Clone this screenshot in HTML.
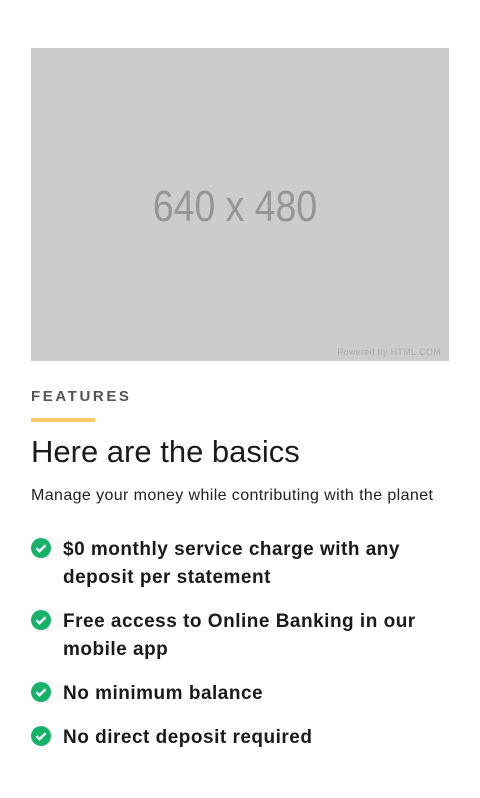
<!DOCTYPE html>
<html><head><style>
body{margin:0;background:#fff;font-family:"Liberation Sans",sans-serif;color:#1a1a1a}
.img{position:absolute;left:31px;top:48px;width:418px;height:313px;background:#ccc}
.img .t{position:absolute;left:-10px;right:0;top:134px;text-align:center;font-size:44px;color:#969696;transform:scaleX(.85)}
.img .p{position:absolute;right:8px;bottom:4px;font-size:9px;color:#aaa;letter-spacing:.3px}
.f{position:absolute;left:31px;top:388px;font-size:15px;font-weight:bold;letter-spacing:2.6px;color:#555}
.bar{position:absolute;left:31px;top:418px;width:64px;height:4px;background:#fbc765}
h1{position:absolute;left:31px;top:434px;margin:0;font-size:31px;font-weight:normal;color:#1b1b1b}
.s{position:absolute;left:31px;top:487px;font-size:16px;letter-spacing:.4px;color:#222}
.i{position:absolute;left:63px;font-size:19px;font-weight:bold;line-height:28px;width:400px;letter-spacing:.5px}
.c{position:absolute;left:31px;width:20px;height:20px}
</style></head><body>
<div class="img"><div class="t">640 x 480</div><div class="p">Powered by HTML.COM</div></div>
<div class="f">FEATURES</div><div class="bar"></div>
<h1>Here are the basics</h1>
<div class="s">Manage your money while contributing with the planet</div>
<svg class="c" style="top:538px" viewBox="0 0 20 20"><circle cx="10" cy="10" r="10" fill="#17b26a"/><path d="M5.5 10.2l3 3 6-6" stroke="#fff" stroke-width="2.4" fill="none"/></svg>
<div class="i" style="top:536px">$0 monthly service charge with any deposit per statement</div>
<svg class="c" style="top:610px" viewBox="0 0 20 20"><circle cx="10" cy="10" r="10" fill="#17b26a"/><path d="M5.5 10.2l3 3 6-6" stroke="#fff" stroke-width="2.4" fill="none"/></svg>
<div class="i" style="top:608px">Free access to Online Banking in our mobile app</div>
<svg class="c" style="top:682px" viewBox="0 0 20 20"><circle cx="10" cy="10" r="10" fill="#17b26a"/><path d="M5.5 10.2l3 3 6-6" stroke="#fff" stroke-width="2.4" fill="none"/></svg>
<div class="i" style="top:680px">No minimum balance</div>
<svg class="c" style="top:726px" viewBox="0 0 20 20"><circle cx="10" cy="10" r="10" fill="#17b26a"/><path d="M5.5 10.2l3 3 6-6" stroke="#fff" stroke-width="2.4" fill="none"/></svg>
<div class="i" style="top:724px">No direct deposit required</div>
</body></html>
